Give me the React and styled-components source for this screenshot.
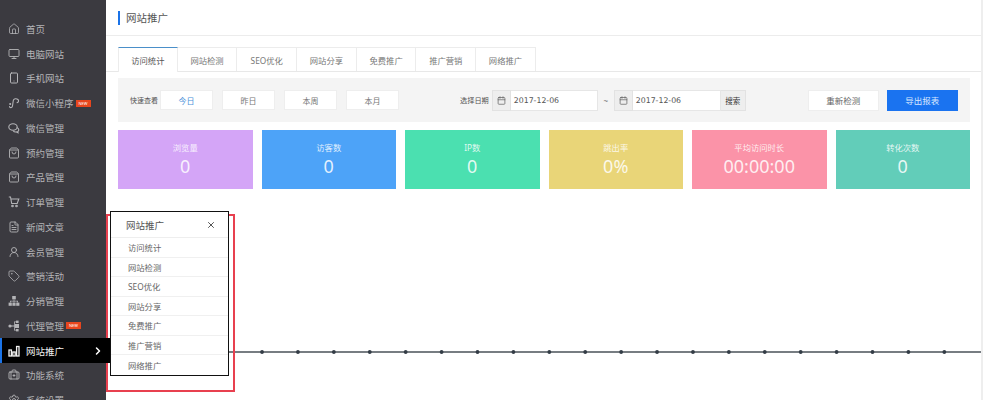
import React from "react";
import styled, { createGlobalStyle } from "styled-components";
import { House, Monitor, Smartphone, ShoppingBag, FileText, UserRound, Tag, X, ChevronRight, BriefcaseMedical, Settings, Calendar } from "lucide-react";

const GlobalStyle = createGlobalStyle`
  html, body {
    margin: 0;
    height: 100%;
    overflow: hidden;
    background: #fff;
  }
  * {
    box-sizing: border-box;
  }
  body {
    font-family: "Noto Sans", "Noto Sans CJK SC", sans-serif;
  }
`;

const Page = styled.div`
  position: relative;
  display: flex;
  width: 983px;
  height: 400px;
  overflow: hidden;
`;

const Sidebar = styled.nav`
  position: relative;
  z-index: 2;
  flex: 0 0 106px;
  height: 400px;
  padding-top: 16.6px;
  background: #3b3a40;
`;

const MenuItem = styled.div`
  display: flex;
  align-items: center;
  height: 24.75px;
  padding-left: ${({ $active }) => ($active ? "6px" : "8px")};
  margin-right: ${({ $active }) => ($active ? "-4px" : "0")};
  border-left: ${({ $active }) => ($active ? "2px solid #1a73e8" : "none")};
  background: ${({ $active }) => ($active ? "#000" : "transparent")};
  color: ${({ $active }) => ($active ? "#f2f2f2" : "#b4b4b7")};
  font-size: 9.5px;
  white-space: nowrap;

  svg {
    flex: 0 0 12px;
    width: 12px;
    height: 12px;
    margin-right: 6px;
  }
`;

const NewBadge = styled.span`
  display: inline-block;
  width: 15px;
  height: 7px;
  margin-left: 2px;
  background: #e8461e;
  color: #fff;
  font-size: 4px;
  line-height: 7px;
  text-align: center;
`;

const Arrow = styled.span`
  display: flex;
  margin-left: auto;
  margin-right: 6px;

  svg {
    width: 12px;
    height: 12px;
    margin: 0;
    flex-basis: 12px;
    color: #fff;
  }
`;

const Main = styled.main`
  flex: 1;
  display: flex;
  flex-direction: column;
  min-width: 0;
  border-right: 2px solid #eeeeee;
`;

const TitleBar = styled.header`
  display: flex;
  align-items: center;
  height: 36px;
  padding-left: 12px;
  border-bottom: 1px solid #ececec;
`;

const TitleMark = styled.span`
  width: 2px;
  height: 14px;
  margin-right: 6px;
  background: #1a73e8;
`;

const Title = styled.h1`
  margin: 0;
  color: #555;
  font-size: 10.5px;
  font-weight: 400;
`;

const TabBar = styled.div`
  display: flex;
  height: 25px;
  margin-top: 11px;
  padding-left: 12px;
  border-bottom: 1px solid #e8e8e8;
`;

const Tab = styled.div`
  display: flex;
  align-items: center;
  justify-content: center;
  width: 59.7px;
  height: ${({ $active }) => ($active ? "25px" : "24px")};
  border: 1px solid #ececec;
  border-left: ${({ $active }) => ($active ? "1px solid #ececec" : "none")};
  border-top: ${({ $active }) => ($active ? "1.5px solid #4a8fc9" : "1px solid #ececec")};
  border-bottom: none;
  background: #fff;
  color: ${({ $active }) => ($active ? "#555" : "#777")};
  font-size: 8.3px;
`;

const FilterBar = styled.div`
  display: flex;
  align-items: center;
  height: 44px;
  margin: 6px 11px 0 12px;
  padding-left: 12px;
  background: #f4f4f4;
`;

const FilterLabel = styled.span`
  color: #555;
  font-size: 7px;
  white-space: nowrap;
`;

const QuickButton = styled.button`
  width: 53px;
  height: 20px;
  margin-left: ${({ $first }) => ($first ? "2px" : "9px")};
  padding: 0;
  border: 1px solid #eeeeee;
  background: #fff;
  color: ${({ $active }) => ($active ? "#4a90d9" : "#777")};
  font-family: inherit;
  font-size: 8px;
`;

const DateLabel = styled(FilterLabel)`
  margin-left: 61px;
  margin-right: 3px;
  font-size: 7.2px;
`;

const DateGroup = styled.div`
  display: flex;
  height: 21px;
`;

const DateAddon = styled.span`
  display: flex;
  align-items: center;
  justify-content: center;
  width: 19px;
  border: 1px solid #e2e2e2;
  background: #eeeeee;
  color: #666;

  svg {
    width: 9px;
    height: 9px;
  }
`;

const DateInput = styled.div`
  display: flex;
  align-items: center;
  width: ${({ $wide }) => ($wide ? "88px" : "87px")};
  padding-left: 3px;
  border: 1px solid #e6e6e6;
  border-left: none;
  background: #fff;
  color: #555;
  font-family: "DejaVu Sans", sans-serif;
  font-size: 7.8px;
`;

const Tilde = styled.span`
  width: 16px;
  color: #777;
  font-size: 8px;
  text-align: center;
`;

const SearchButton = styled.span`
  display: flex;
  align-items: center;
  justify-content: center;
  width: 25px;
  border: 1px solid #e2e2e2;
  border-left: none;
  background: #eeeeee;
  color: #333;
  font-size: 7.5px;
`;

const ActionButton = styled.button`
  width: 71px;
  height: 21px;
  margin-left: ${({ $first }) => ($first ? "62px" : "8px")};
  padding: 0;
  border: ${({ $primary }) => ($primary ? "none" : "1px solid #eeeeee")};
  background: ${({ $primary }) => ($primary ? "#1a73f0" : "#fff")};
  color: ${({ $primary }) => ($primary ? "#d8e8ff" : "#666")};
  font-family: inherit;
  font-size: 8.5px;
`;

const CardRow = styled.div`
  display: grid;
  grid-template-columns: repeat(6, 1fr);
  gap: 9px;
  height: 59px;
  margin: 8px 11px 0 12px;
`;

const Card = styled.div`
  display: flex;
  flex-direction: column;
  align-items: center;
  padding-top: 12px;
  background: ${({ $color }) => $color};
  color: rgba(255, 255, 255, 0.85);
`;

const CardLabel = styled.span`
  font-size: 8.3px;
  line-height: 12px;
`;

const CardValue = styled.span`
  font-size: 18px;
  line-height: 24px;
`;

const Chart = styled.svg`
  display: block;
  flex: 1;
  width: 100%;
  min-height: 0;
`;

const MarkBox = styled.div`
  position: absolute;
  z-index: 1;
  left: 105.5px;
  top: 214px;
  width: 129px;
  height: 178px;
  border: 2px solid #e8404f;
`;

const Popup = styled.div`
  position: absolute;
  z-index: 3;
  left: 110px;
  top: 211px;
  width: 119px;
  height: 165px;
  border: 1px solid #111;
  background: #fff;
`;

const PopupHead = styled.div`
  display: flex;
  align-items: center;
  justify-content: space-between;
  height: 26px;
  padding: 0 12px 0 15px;
  border-bottom: 1px solid #eeeeee;
  color: #555;
  font-size: 9.5px;

  svg {
    width: 10px;
    height: 10px;
    color: #333;
  }
`;

const PopupRow = styled.div`
  display: flex;
  align-items: center;
  height: 19.5px;
  padding-left: 17px;
  border-bottom: 1px solid #f0f0f0;
  color: #666;
  font-size: 8.3px;

  &:last-child {
    border-bottom: none;
  }
`;

const MiniIcon = () => (
  <svg viewBox="0 0 12 12" fill="none" stroke="currentColor" strokeWidth="1.1" strokeLinecap="round">
    <path d="M1.5 9.5c0 1.6 2.8 1.6 3-.5l.8-5.5c.3-2 3.2-2.2 4.6-1 1.2 1 .7 3-.9 3.2" />
    <circle cx="2.2" cy="7" r=".5" />
  </svg>
);

const ChatIcon = () => (
  <svg viewBox="0 0 12 12" fill="none" stroke="currentColor" strokeWidth="1.1">
    <ellipse cx="5" cy="5" rx="4.2" ry="3.2" />
    <path d="M8.8 5.5c1.3.5 2 1.2 2 2.2 0 .8-.5 1.4-1 1.8l.2 1.2-1.6-.8c-1.3.2-2.6-.2-3.2-1.2" />
  </svg>
);

const CartIcon = () => (
  <svg viewBox="0 0 12 12" fill="none" stroke="currentColor" strokeWidth="1.1">
    <path d="M.8 1h1.7l1.2 6.5h5.5L10.8 3H3" />
    <circle cx="4.5" cy="10" r=".8" />
    <circle cx="8.5" cy="10" r=".8" />
  </svg>
);

const TreeIcon = () => (
  <svg viewBox="0 0 12 12" fill="currentColor">
    <rect x="4.2" y="1" width="3.6" height="3.4" />
    <rect x=".6" y="7.6" width="3.2" height="3.2" />
    <rect x="4.4" y="7.6" width="3.2" height="3.2" />
    <rect x="8.2" y="7.6" width="3.2" height="3.2" />
    <path d="M5.6 4.4h.8v1.4H10v1.8h-.8V6.6H6.4v1h-.8v-1H2.8v1H2V5.8h3.6z" />
  </svg>
);

const AgentIcon = () => (
  <svg viewBox="0 0 12 12" fill="currentColor">
    <circle cx="2" cy="6" r="1.6" />
    <rect x="7" y="4" width="4" height="4" />
    <rect x="8" y=".6" width="2.6" height="2.4" />
    <rect x="8" y="9" width="2.6" height="2.4" />
    <path d="M2 5.6h5v.8H2zM6 1.4h2v.8H6.8v7.6H8v.8H6z" />
  </svg>
);

const BarsIcon = () => (
  <svg viewBox="0 0 12 12" fill="none" stroke="currentColor" strokeWidth="1.3">
    <rect x="1" y="5" width="2.4" height="6" />
    <rect x="4.8" y="7" width="2.4" height="4" />
    <rect x="8.6" y="1.5" width="2.4" height="9.5" />
  </svg>
);

const menu = [
  { label: "首页", icon: <House strokeWidth={1.6} /> },
  { label: "电脑网站", icon: <Monitor strokeWidth={1.8} /> },
  { label: "手机网站", icon: <Smartphone strokeWidth={2} /> },
  { label: "微信小程序", icon: <MiniIcon />, badge: true },
  { label: "微信管理", icon: <ChatIcon /> },
  { label: "预约管理", icon: <ShoppingBag strokeWidth={1.8} /> },
  { label: "产品管理", icon: <ShoppingBag strokeWidth={1.8} /> },
  { label: "订单管理", icon: <CartIcon /> },
  { label: "新闻文章", icon: <FileText strokeWidth={1.8} /> },
  { label: "会员管理", icon: <UserRound strokeWidth={1.8} /> },
  { label: "营销活动", icon: <Tag strokeWidth={1.6} /> },
  { label: "分销管理", icon: <TreeIcon /> },
  { label: "代理管理", icon: <AgentIcon />, badge: true },
  { label: "网站推广", icon: <BarsIcon />, active: true },
  { label: "功能系统", icon: <BriefcaseMedical strokeWidth={1.8} /> },
  { label: "系统设置", icon: <Settings strokeWidth={1.8} /> },
];

const tabs = ["访问统计", "网站检测", "SEO优化", "网站分享", "免费推广", "推广营销", "网络推广"];
const quick = ["今日", "昨日", "本周", "本月"];

const cards = [
  { label: "浏览量", value: "0", color: "#d4a5f7" },
  { label: "访客数", value: "0", color: "#4da3f8" },
  { label: "IP数", value: "0", color: "#4be0b0" },
  { label: "跳出率", value: "0%", color: "#e9d578" },
  { label: "平均访问时长", value: "00:00:00", color: "#fb93a8" },
  { label: "转化次数", value: "0", color: "#62cdb9" },
];

const dots = Array.from({ length: 24 }, (_, i) => 12.4 + i * 35.91);

const App = () => {
  return (
    <Page>
      <GlobalStyle />
      <Sidebar>
        {menu.map((item) => (
          <MenuItem key={item.label} $active={item.active}>
            {item.icon}
            {item.label}
            {item.badge && <NewBadge>NEW</NewBadge>}
            {item.active && (
              <Arrow>
                <ChevronRight strokeWidth={3} />
              </Arrow>
            )}
          </MenuItem>
        ))}
      </Sidebar>
      <Main>
        <TitleBar>
          <TitleMark />
          <Title>网站推广</Title>
        </TitleBar>
        <TabBar>
          {tabs.map((tab, i) => (
            <Tab key={tab} $active={i === 0}>
              {tab}
            </Tab>
          ))}
        </TabBar>
        <FilterBar>
          <FilterLabel>快速查看</FilterLabel>
          {quick.map((q, i) => (
            <QuickButton key={q} $first={i === 0} $active={i === 0}>
              {q}
            </QuickButton>
          ))}
          <DateLabel>选择日期</DateLabel>
          <DateGroup>
            <DateAddon>
              <Calendar />
            </DateAddon>
            <DateInput>2017-12-06</DateInput>
          </DateGroup>
          <Tilde>~</Tilde>
          <DateGroup>
            <DateAddon>
              <Calendar />
            </DateAddon>
            <DateInput $wide>2017-12-06</DateInput>
            <SearchButton>搜索</SearchButton>
          </DateGroup>
          <ActionButton $first>重新检测</ActionButton>
          <ActionButton $primary>导出报表</ActionButton>
        </FilterBar>
        <CardRow>
          {cards.map((card) => (
            <Card key={card.label} $color={card.color}>
              <CardLabel>{card.label}</CardLabel>
              <CardValue>{card.value}</CardValue>
            </Card>
          ))}
        </CardRow>
        <Chart>
          <line x1="12" y1="163" x2="877" y2="163" stroke="#4a5259" strokeWidth="1.4" />
          {dots.map((x) => (
            <circle key={x} cx={x} cy="163" r="1.9" fill="#333c46" />
          ))}
        </Chart>
      </Main>
      <MarkBox />
      <Popup>
        <PopupHead>
          网站推广
          <X strokeWidth={2} />
        </PopupHead>
        {tabs.map((tab) => (
          <PopupRow key={tab}>{tab}</PopupRow>
        ))}
      </Popup>
    </Page>
  );
};

export default App;
